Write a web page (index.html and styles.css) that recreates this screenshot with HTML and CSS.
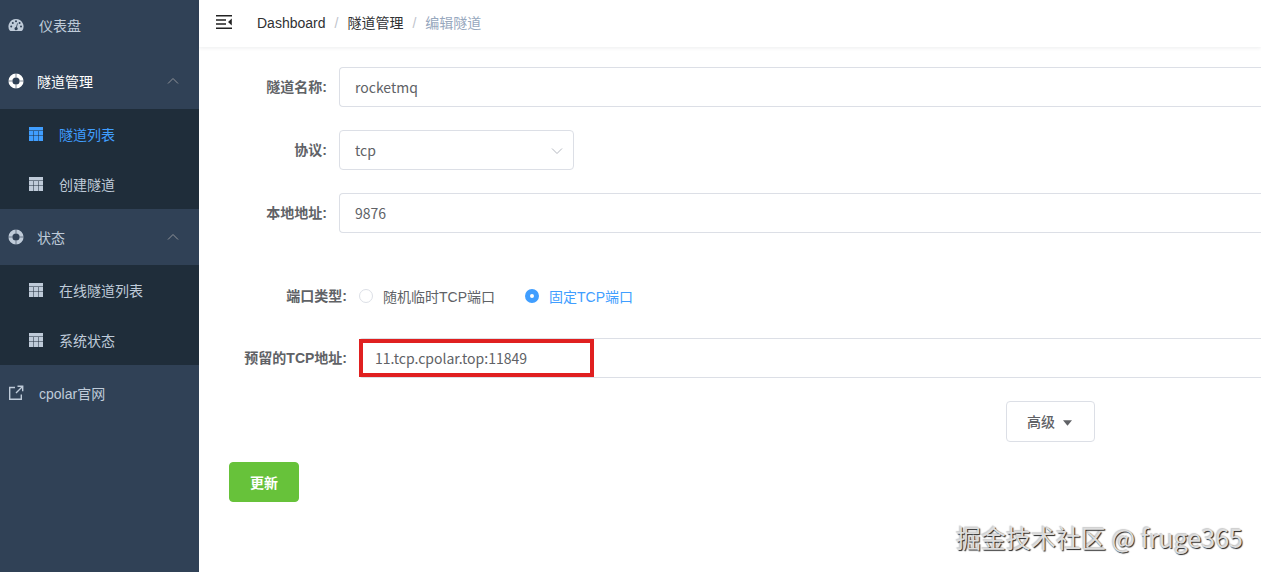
FILE: index.html
```html
<!DOCTYPE html>
<html lang="zh-CN">
<head>
    <meta charset="UTF-8">
    <meta name="viewport" content="width=device-width, initial-scale=1.0">
    <title>编辑隧道</title>
    <link rel="stylesheet" href="styles.css">
</head>
<body>

    <svg class="sprite" aria-hidden="true">
        <symbol id="icon-table" viewBox="0 0 14 14">
            <path d="M0 0h14v3.500H0zM0 4h4.400v4.500H0zM4.900 4h4.200v4.500H4.900zM9.600 4H14v4.500H9.600zM0 9h4.400v5H0zM4.900 9h4.200v5H4.900zM9.600 9H14v5H9.600z"/>
        </symbol>
        <symbol id="icon-ring" viewBox="0 0 16 16">
            <circle cx="8" cy="8" r="5.600" fill="none" stroke="currentColor" stroke-width="4"/>
            <path d="M8 0v4.500M8 11.500v4.500M0 8h4.500M11.500 8H16" fill="none" stroke="#304156" stroke-width=".6"/>
        </symbol>
        <symbol id="icon-arrow" viewBox="0 0 12 12">
            <path d="M1 8.500L6 3.500l5 5" fill="none" stroke="currentColor" stroke-width="1"/>
        </symbol>
    </svg>

    <div class="app">
        <nav class="sidebar">
            <a class="menu-item first" href="#">
                <svg class="icon" viewBox="0 0 16 14">
                    <path fill-rule="evenodd" d="M8 1a7.500 7.500 0 0 0-6.300 11.600q.3.400.8.400h11q.5 0 .8-.4A7.500 7.500 0 0 0 8 1zM3.200 7.500a1 1 0 1 1 0 2 1 1 0 0 1 0-2zM4.800 4a1 1 0 1 1 0 2 1 1 0 0 1 0-2zM8 2.300a1 1 0 1 1 0 2 1 1 0 0 1 0-2zM11.600 4a1 1 0 1 1 0 2 1 1 0 0 1 0-2zM13 7.500a1 1 0 1 1 0 2 1 1 0 0 1 0-2zM9.100 5.300l.7.200-.9 3.700a1.600 1.600 0 1 1-.8-.2z"/>
                </svg>
                <span>仪表盘</span>
            </a>

            <button type="button" class="menu-item submenu-title active">
                <svg class="icon"><use href="#icon-ring"/></svg>
                <span>隧道管理</span>
                <svg class="arrow"><use href="#icon-arrow"/></svg>
            </button>
            <div class="submenu">
                <a class="submenu-item current" href="#"><svg class="icon-small"><use href="#icon-table"/></svg><span>隧道列表</span></a>
                <a class="submenu-item" href="#"><svg class="icon-small"><use href="#icon-table"/></svg><span>创建隧道</span></a>
            </div>

            <button type="button" class="menu-item submenu-title">
                <svg class="icon"><use href="#icon-ring"/></svg>
                <span>状态</span>
                <svg class="arrow"><use href="#icon-arrow"/></svg>
            </button>
            <div class="submenu">
                <a class="submenu-item" href="#"><svg class="icon-small"><use href="#icon-table"/></svg><span>在线隧道列表</span></a>
                <a class="submenu-item" href="#"><svg class="icon-small"><use href="#icon-table"/></svg><span>系统状态</span></a>
            </div>

            <a class="menu-item" href="#">
                <svg class="icon" viewBox="0 0 16 16">
                    <path d="M7 2.500H1.700v11.800h11.600V9.500M9.500 1.200h5.200v5M14.500 1.500L8 8" fill="none" stroke="currentColor" stroke-width="1.400"/>
                </svg>
                <span>cpolar官网</span>
            </a>
        </nav>

        <div class="main">
            <header class="navbar">
                <button type="button" class="hamburger" aria-label="菜单">
                    <svg viewBox="0 0 16 14">
                        <path d="M0 0h16v1.500H0zM0 4.200h10v1.500H0zM0 8.300h10v1.500H0zM0 12.500h16V14H0zM15.800 3.500v7L12 7z"/>
                    </svg>
                </button>
                <div class="breadcrumb">
                    <a href="#">Dashboard</a>
                    <span class="separator">/</span>
                    <a href="#">隧道管理</a>
                    <span class="separator">/</span>
                    <span class="last">编辑隧道</span>
                </div>
            </header>

            <form class="form">
                <div class="form-item">
                    <label for="name">隧道名称:</label>
                    <input class="text-input" id="name" type="text" value="rocketmq">
                </div>
                <div class="form-item">
                    <label for="protocol">协议:</label>
                    <div class="select">
                        <select id="protocol">
                            <option>tcp</option>
                        </select>
                        <svg class="select-arrow"><use href="#icon-arrow"/></svg>
                    </div>
                </div>
                <div class="form-item">
                    <label for="address">本地地址:</label>
                    <input class="text-input" id="address" type="text" value="9876">
                </div>

                <div class="form-item wide radios" role="radiogroup" aria-labelledby="port-type">
                    <span class="label" id="port-type">端口类型:</span>
                    <label class="radio"><input type="radio" name="port">随机临时TCP端口</label>
                    <label class="radio"><input type="radio" name="port" checked>固定TCP端口</label>
                </div>
                <div class="form-item wide">
                    <label for="reserved">预留的TCP地址:</label>
                    <div class="marked">
                        <input class="text-input" id="reserved" type="text" value="11.tcp.cpolar.top:11849">
                        <div class="marker"></div>
                    </div>
                </div>

                <div class="advanced">
                    <button type="button" class="btn">高级 <svg class="caret" viewBox="0 0 10 6"><path d="M0 0h10L5 6z"/></svg></button>
                </div>
                <button type="submit" class="btn btn-success">更新</button>
            </form>
        </div>
    </div>

    <div class="watermark">掘金技术社区 @ fruge365</div>

</body>
</html>
```
FILE: styles.css
```css
* {
    margin: 0;
    padding: 0;
    box-sizing: border-box;
}

body {
    font-family: "Liberation Sans", "Noto Sans CJK SC", sans-serif;
    font-size: 14px;
    color: #606266;
    background: #fff;
    overflow: hidden;
}

button, input, select {
    font: inherit;
    color: inherit;
}

a {
    color: inherit;
    text-decoration: none;
}

.sprite {
    display: none;
}

.app {
    display: flex;
    min-height: 100vh;
}

/* sidebar */
.sidebar {
    width: 199px;
    flex-shrink: 0;
    background: #304156;
    color: #bfcbd9;
}

.sidebar svg {
    fill: currentColor;
    flex-shrink: 0;
}

.menu-item {
    display: flex;
    align-items: center;
    width: 100%;
    height: 56px;
    padding: 0 20px 0 8px;
    gap: 15px;
    border: none;
    background: none;
    color: #bfcbd9;
    text-align: left;
}

.menu-item.first {
    height: 53px;
    padding-bottom: 4px;
}

.submenu-title {
    gap: 13px;
}

.menu-item.active {
    color: #fff;
}

.icon {
    width: 16px;
    height: 16px;
}

.icon-small {
    width: 14px;
    height: 14px;
}

.arrow {
    width: 12px;
    height: 12px;
    margin-left: auto;
    color: #909399;
}

.submenu {
    background: #1f2d3a;
}

.submenu-item {
    display: flex;
    align-items: center;
    gap: 16px;
    height: 50px;
    padding-left: 29px;
}

.submenu-item.current {
    color: #409eff;
}

/* header */
.main {
    flex: 1;
    min-width: 0;
}

.navbar {
    display: flex;
    align-items: center;
    height: 47px;
    padding: 0 17px 4px;
    gap: 25px;
    box-shadow: 0 1px 4px rgba(0, 21, 41, 0.08);
}

.hamburger {
    width: 16px;
    height: 14px;
    border: none;
    background: none;
}

.hamburger svg {
    display: block;
    fill: #222;
}

.breadcrumb {
    display: flex;
    align-items: baseline;
    gap: 9px;
    color: #303133;
}

.separator {
    color: #c0c4cc;
}

.last {
    color: #97a8be;
}

/* form */
.form {
    padding: 20px 0 0 30px;
}

.form-item {
    display: flex;
    gap: 12px;
    margin-bottom: 23px;
}

.form-item > label:first-child,
.label {
    width: 98px;
    line-height: 40px;
    font-weight: bold;
    text-align: right;
}

.form-item.wide > label:first-child,
.wide .label {
    width: 118px;
}

.text-input {
    flex: 1;
    min-width: 0;
    height: 40px;
    padding: 0 15px;
    border: 1px solid #dcdfe6;
    border-right: none;
    border-radius: 4px 0 0 4px;
    font-family: "Noto Sans CJK SC", sans-serif;
    background: #fff;
}

.select {
    position: relative;
    width: 235px;
}

.select select {
    width: 100%;
    height: 40px;
    padding: 0 15px;
    border: 1px solid #dcdfe6;
    border-radius: 4px;
    background: #fff;
    font-family: "Noto Sans CJK SC", sans-serif;
    appearance: none;
}

.select-arrow {
    position: absolute;
    top: 15px;
    right: 11px;
    width: 12px;
    height: 12px;
    color: #b4b8c0;
    transform: rotate(180deg);
    pointer-events: none;
}

.radios {
    margin-top: 43px;
    margin-bottom: 22px;
}

.radio {
    display: flex;
    align-items: center;
    gap: 10px;
    margin-right: 18px;
}

.radio input {
    width: 14px;
    height: 14px;
    border: 1px solid #dcdfe6;
    border-radius: 50%;
    background: #fff;
    appearance: none;
}

.radio input:checked {
    border: 5px solid #409eff;
}

.radio:has(input:checked) {
    color: #409eff;
}

.marked {
    position: relative;
    display: flex;
    flex: 1;
}

.marker {
    position: absolute;
    top: 1px;
    left: 0;
    width: 235px;
    height: 38px;
    border: 4px solid #e02020;
    pointer-events: none;
}

.advanced {
    display: flex;
    justify-content: flex-end;
    padding-right: 166px;
    margin-bottom: 20px;
}

.btn {
    height: 41px;
    padding: 0 22px 2px 20px;
    border: 1px solid #dcdfe6;
    border-radius: 4px;
    background: #fff;
    font-weight: 500;
}

.caret {
    width: 9px;
    height: 6px;
    margin-left: 4px;
    vertical-align: 1px;
    fill: #606266;
}

.btn-success {
    height: 40px;
    padding: 0 20px;
    border-color: #67c23a;
    background: #67c23a;
    color: #fff;
    font-weight: bold;
}

.watermark {
    position: absolute;
    right: 18px;
    bottom: 17px;
    font-family: "Noto Sans CJK SC", sans-serif;
    font-size: 25px;
    color: #ddd;
    text-shadow: 1px 1px 1px #222, -1px -1px 1px #ccc;
}
```
